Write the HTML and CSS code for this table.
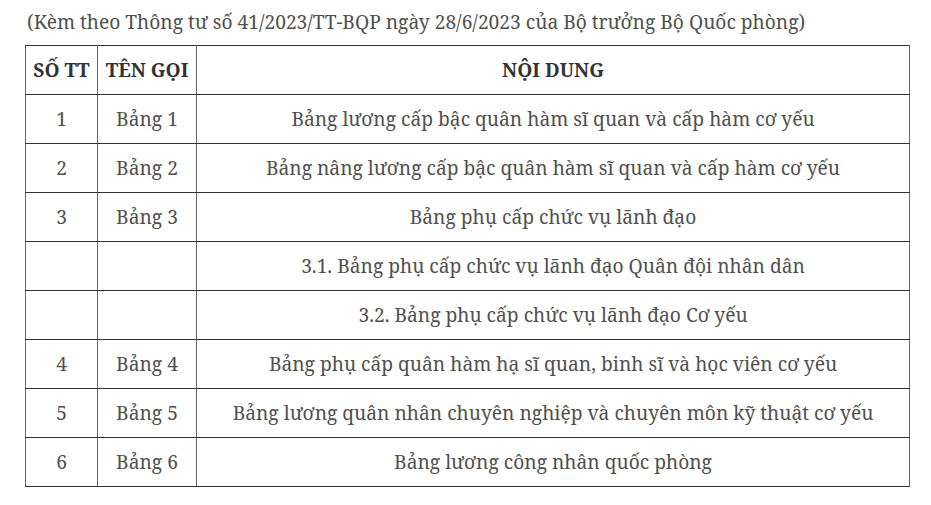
FILE: index.html
```html
<!DOCTYPE html>
<html lang="vi">
<head>
<meta charset="utf-8">
<link rel="stylesheet" href="styles.css">
</head>
<body>
<div class="page">
<p class="note">(Kèm theo Thông tư số 41/2023/TT-BQP ngày 28/6/2023 của Bộ trưởng Bộ Quốc phòng)</p>
<table class="list">
<colgroup><col class="c1"><col class="c2"><col class="c3"></colgroup>
<thead>
<tr><th>SỐ TT</th><th>TÊN GỌI</th><th>NỘI DUNG</th></tr>
</thead>
<tbody>
<tr><td>1</td><td>Bảng 1</td><td>Bảng lương cấp bậc quân hàm sĩ quan và cấp hàm cơ yếu</td></tr>
<tr><td>2</td><td>Bảng 2</td><td>Bảng nâng lương cấp bậc quân hàm sĩ quan và cấp hàm cơ yếu</td></tr>
<tr><td>3</td><td>Bảng 3</td><td>Bảng phụ cấp chức vụ lãnh đạo</td></tr>
<tr><td></td><td></td><td>3.1. Bảng phụ cấp chức vụ lãnh đạo Quân đội nhân dân</td></tr>
<tr><td></td><td></td><td>3.2. Bảng phụ cấp chức vụ lãnh đạo Cơ yếu</td></tr>
<tr><td>4</td><td>Bảng 4</td><td>Bảng phụ cấp quân hàm hạ sĩ quan, binh sĩ và học viên cơ yếu</td></tr>
<tr><td>5</td><td>Bảng 5</td><td>Bảng lương quân nhân chuyên nghiệp và chuyên môn kỹ thuật cơ yếu</td></tr>
<tr><td>6</td><td>Bảng 6</td><td>Bảng lương công nhân quốc phòng</td></tr>
</tbody>
</table>
</div>
</body>
</html>
```
FILE: styles.css
```css
html, body {
  margin: 0;
  padding: 0;
  background: #fff;
}
body {
  font-family: "Noto Serif", "DejaVu Serif", "Liberation Serif", serif;
  color: #505050;
  font-size: 19.2px;
}
.page {
  padding: 0 21px 0 25px;
}
.note {
  margin: 0;
  padding: 9px 0 0 2px;
  height: 45px;
  box-sizing: border-box;
  line-height: 26px;
}
.list {
  width: 885px;
  border-collapse: collapse;
  table-layout: fixed;
}
.c1 { width: 72px; }
.c2 { width: 99px; }
.list th, .list td {
  border-top: 1px solid #333;
  border-bottom: 1px solid #333;
  border-left: 1px solid #666;
  border-right: 1px solid #666;
  height: 49px;
  padding: 0 6px;
  text-align: center;
  vertical-align: middle;
  line-height: 26px;
  box-sizing: border-box;
  white-space: nowrap;
}
.list th {
  font-weight: bold;
  color: #333;
}
```
